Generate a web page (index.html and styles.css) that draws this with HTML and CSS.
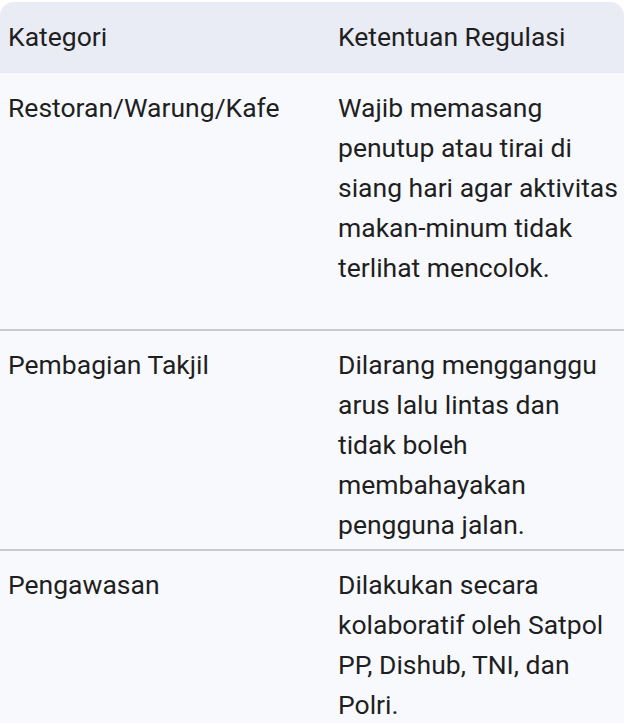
FILE: index.html
```html
<!DOCTYPE html>
<html lang="id">
<head>
<meta charset="utf-8">
<title>Ketentuan Regulasi</title>
<link rel="stylesheet" href="styles.css">
</head>
<body>
<div class="table">
  <div class="row head">
    <div class="cell">Kategori</div>
    <div class="cell">Ketentuan Regulasi</div>
  </div>
  <div class="row first">
    <div class="cell">Restoran/Warung/Kafe</div>
    <div class="cell">Wajib memasang penutup atau tirai di siang hari agar aktivitas makan-minum tidak terlihat mencolok.</div>
  </div>
  <div class="row">
    <div class="cell">Pembagian Takjil</div>
    <div class="cell">Dilarang mengganggu arus lalu lintas dan tidak boleh membahayakan pengguna jalan.</div>
  </div>
  <div class="row last">
    <div class="cell">Pengawasan</div>
    <div class="cell">Dilakukan secara kolaboratif oleh Satpol PP, Dishub, TNI, dan Polri.</div>
  </div>
</div>
</body>
</html>
```

FILE: styles.css
```css
html, body {
  margin: 0;
  padding: 0;
  background: #ffffff;
}
body {
  font-family: Roboto, "Noto Sans", sans-serif;
  font-size: 26.5px;
  line-height: 40px;
  color: #1f1f1f;
  padding-top: 2px;
}
.table {
  background: #f8f9fd;
  border-radius: 14px 14px 0 0;
  overflow: hidden;
}
.row {
  display: grid;
  grid-template-columns: 330px 1fr;
  padding: 14px 0 4px;
  border-top: 2px solid #cbcbce;
}
.row.head {
  background: #e9ecf4;
  border-top: none;
  padding: 15px 0 16px;
}
.row.first {
  border-top: none;
  padding: 15px 0 41px;
}
.row.last {
  padding-bottom: 0;
}
.cell {
  padding: 0 8px;
}
.cell + .cell {
  padding-right: 0;
}
```
